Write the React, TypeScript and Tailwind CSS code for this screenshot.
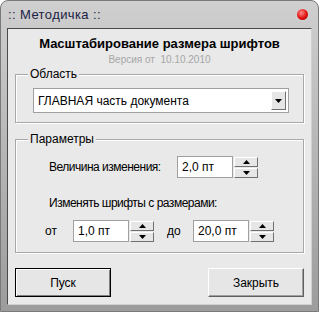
import React from "react";

const font = { fontFamily: '"Liberation Sans", Arial, sans-serif' };

function Arrow({ up }: { up?: boolean }) {
  return (
    <svg width="7" height="4" viewBox="0 0 7 4">
      {up ? <polygon points="0,4 7,4 3.5,0" fill="#000" /> : <polygon points="0,0 7,0 3.5,4" fill="#000" />}
    </svg>
  );
}

function Spin({ value }: { value: string }) {
  return (
    <div className="flex items-center gap-[1px]">
      <div className="w-[56px] h-[22px] bg-white border border-[#a0a0a0] flex items-center pl-[4px] text-[12px] text-black whitespace-nowrap">
        {value}
      </div>
      <div className="flex flex-col gap-[1px]">
        <div className="w-[24px] h-[10px] bg-[#e6e6e6] border-t border-l border-white border-r border-b border-r-[#707070] border-b-[#707070] flex items-center justify-center">
          <Arrow up />
        </div>
        <div className="w-[24px] h-[10px] bg-[#e6e6e6] border-t border-l border-white border-r border-b border-r-[#707070] border-b-[#707070] flex items-center justify-center">
          <Arrow />
        </div>
      </div>
    </div>
  );
}

function Group({ title, className, children }: { title: string; className: string; children: React.ReactNode }) {
  return (
    <div className={`relative border border-[#a8a8a8] shadow-[inset_1px_1px_0_#fff,1px_1px_0_#fff] ${className}`}>
      <span className="absolute -top-[8px] left-[12px] px-[2px] bg-[#e9e9e9] text-[12px] leading-[14px] text-black">{title}</span>
      {children}
    </div>
  );
}

export default function App() {
  return (
    <div style={font} className="w-[319px] h-[312px] flex flex-col rounded-t-[8px] bg-gradient-to-b from-[#cfcfcf] to-[#9c9c9c] border border-[#7a7a7a]">
      <div className="h-[27px] shrink-0 flex items-center justify-between pl-[7px] pr-[10px]">
        <span className="text-[13px] tracking-[0.4px] text-[#1c1c44]">:: Методичка ::</span>
        <div className="w-[11px] h-[11px] rounded-full bg-[radial-gradient(circle_at_40%_35%,#ff8a8a,#e01010_55%,#900000)] shadow-[0_0_1px_#fff]" />
      </div>
      <div className="h-[277px] mx-[6px] bg-[#e9e9e9] border-t border-l border-[#4a4a4a] border-r border-b border-r-[#d0d0d0] border-b-[#d0d0d0] flex flex-col px-[7px]">
        <div className="mt-[7px] h-[16px] leading-[16px] text-center font-bold text-[13px] text-black">Масштабирование размера шрифтов</div>
        <div className="mt-[2px] h-[12px] leading-[12px] text-center text-[10px] text-[#a6a6a6]">Версия от&nbsp; 10.10.2010</div>

        <Group title="Область" className="mt-[8px] h-[49px] pt-[13px] pl-[17px] pr-[14px]">
          <div className="h-[25px] bg-white border border-[#a0a0a0] flex items-center justify-between pl-[4px] pr-[2px]">
            <span className="text-[12px] text-black whitespace-nowrap">ГЛАВНАЯ часть документа</span>
            <div className="w-[15px] h-[19px] bg-[#e6e6e6] border-t border-l border-white border-r border-b border-r-[#707070] border-b-[#707070] flex items-center justify-center">
              <Arrow />
            </div>
          </div>
        </Group>

        <Group title="Параметры" className="mt-[16px] h-[114px] pt-[16px] pl-[33px]">
          <div className="flex items-center">
            <span className="w-[128px] text-[12px] tracking-[-0.5px] text-black whitespace-nowrap">Величина изменения:</span>
            <Spin value="2,0 пт" />
          </div>
          <div className="mt-[18px] h-[14px] leading-[14px] text-[12px] tracking-[-0.5px] text-black whitespace-nowrap">Изменять шрифты с размерами:</div>
          <div className="mt-[10px] flex items-center -ml-[4px]">
            <span className="w-[28px] text-[12px] text-black">от</span>
            <Spin value="1,0 пт" />
            <span className="ml-[13px] w-[26px] text-[12px] text-black">до</span>
            <Spin value="20,0 пт" />
          </div>
        </Group>

        <div className="mt-[15px] flex justify-between">
          <div className="w-[96px] h-[29px] border border-black bg-[#e6e6e6] shadow-[inset_1px_1px_0_#fff,inset_-1px_-1px_0_#808080] flex items-center justify-center text-[12px] text-black">
            Пуск
          </div>
          <div className="w-[96px] h-[29px] bg-[#e6e6e6] border-t border-l border-white border-r border-b border-r-[#606060] border-b-[#606060] shadow-[inset_-1px_-1px_0_#a0a0a0] flex items-center justify-center text-[12px] text-black">
            Закрыть
          </div>
        </div>
      </div>
    </div>
  );
}
